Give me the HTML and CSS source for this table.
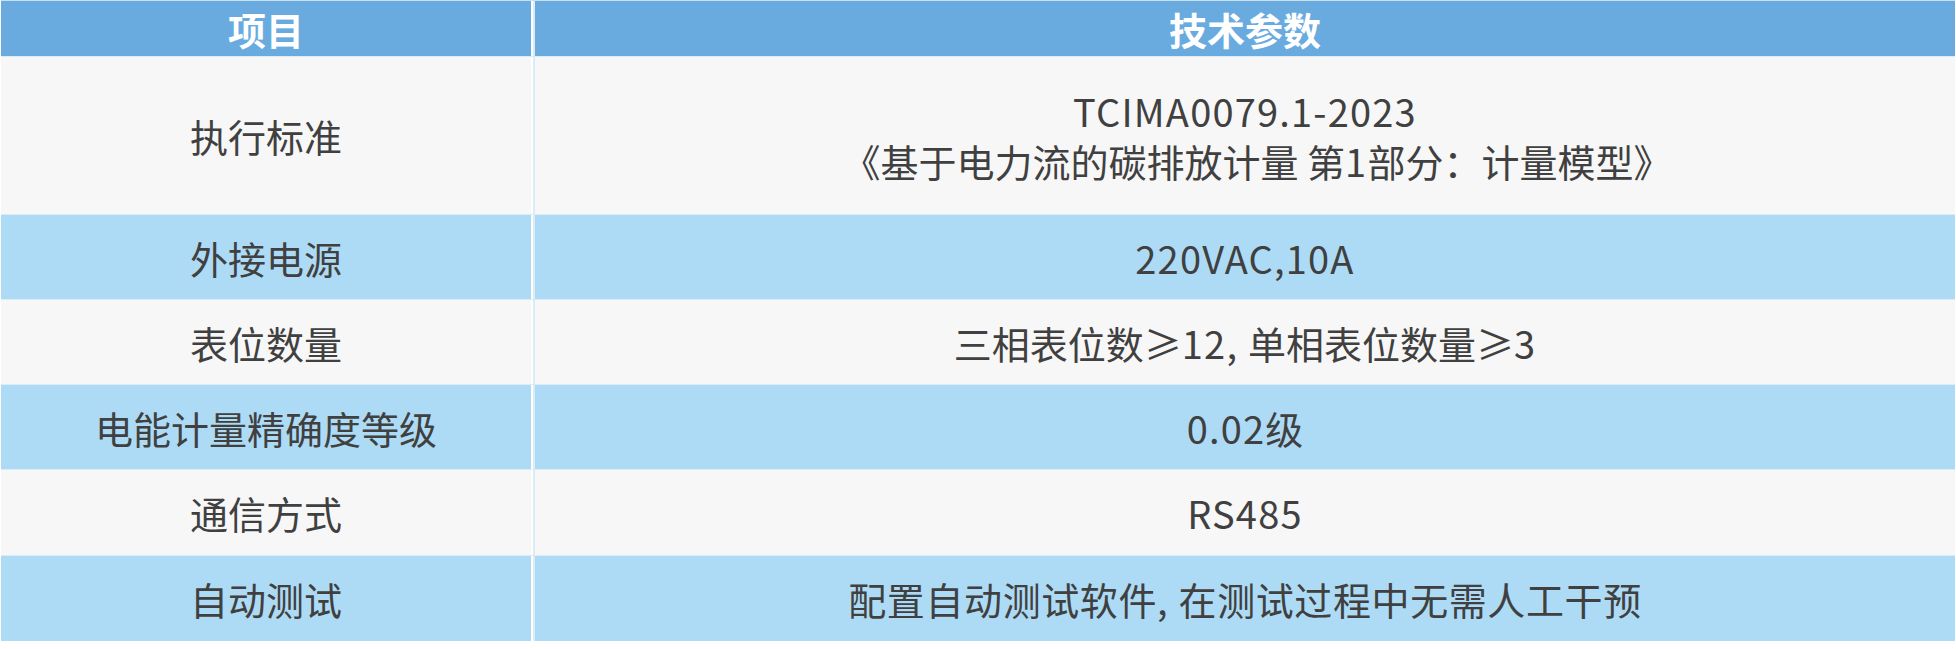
FILE: index.html
```html
<!DOCTYPE html>
<html lang="zh-CN">
<head>
<meta charset="utf-8">
<link rel="stylesheet" href="styles.css">
</head>
<body>
<div class="table">
  <div class="cell head">项目</div>
  <div class="cell head">技术参数</div>

  <div class="cell odd tall">执行标准</div>
  <div class="cell odd tall multi"><span class="lat">TCIMA0079.1-2023</span><span class="line2">《基于电力流的碳排放计量 第<span class="lat">1</span>部分：计量模型》</span></div>

  <div class="cell even">外接电源</div>
  <div class="cell even"><span class="lat">220VAC,10A</span></div>

  <div class="cell odd">表位数量</div>
  <div class="cell odd">三相表位数≥<span class="lat">12,&nbsp;</span>单相表位数量≥<span class="lat">3</span></div>

  <div class="cell even">电能计量精确度等级</div>
  <div class="cell even"><span class="lat">0.02</span>级</div>

  <div class="cell odd r5">通信方式</div>
  <div class="cell odd r5"><span class="lat">RS485</span></div>

  <div class="cell even r5">自动测试</div>
  <div class="cell even r5 spaced">配置自动测试软件<span class="lat">,&nbsp;</span>在测试过程中无需人工干预</div>
</div>
</body>
</html>
```

FILE: styles.css
```css
html, body {
  margin: 0;
  padding: 0;
  background: #ffffff;
}
body {
  font-family: "Noto Sans CJK SC", "Noto Sans", sans-serif;
}
.table {
  margin: 1px 0 0 1px;
  width: 1954px;
  display: grid;
  grid-template-columns: 530px 1420px;
  grid-template-rows: 55px 157px 84px 84px 84px 85px 85px;
  column-gap: 4px;
  row-gap: 1px;
  background: #dcecf7;
  box-shadow: 0 -1px 0 #c9e0f3;
}
.cell {
  display: flex;
  align-items: center;
  justify-content: center;
  font-size: 38px;
  color: #404040;
  text-align: center;
  white-space: pre;
}
.table > .cell:nth-child(2n+1) {
  box-shadow: 2px 0 0 #ffffff;
}
.head {
  background: #69abdf;
  color: #ffffff;
  font-weight: 700;
  font-size: 38px;
}
.odd {
  background: #f7f7f7;
}
.even {
  background: #addbf5;
}
.multi {
  flex-direction: column;
  line-height: 50px;
}
.lat {
  letter-spacing: 1.2px;
}
.spaced {
  letter-spacing: 0.6px;
}
.line2 {
  padding-left: 24px;
}
```
